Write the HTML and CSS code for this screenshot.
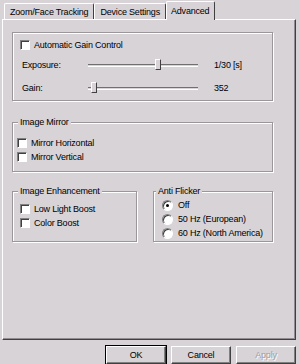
FILE: index.html
```html
<!DOCTYPE html>
<html lang="en">
<head>
  <meta charset="UTF-8">
  <title>Camera Properties</title>
  <link rel="stylesheet" href="styles.css">
</head>
<body>
  <div class="dialog">
    <div class="tabs">
      <div class="tab">Zoom/Face Tracking</div>
      <div class="tab">Device Settings</div>
      <div class="tab active">Advanced</div>
    </div>
    <div class="panel">
      <div class="group gain-group">
        <label class="check-row"><span class="checkbox"></span>Automatic Gain Control</label>
        <div class="slider-row">
          <span class="slider-label">Exposure:</span>
          <div class="slider"><div class="track"></div><div class="thumb" style="margin-left: 67px"></div></div>
          <span class="slider-value">1/30 [s]</span>
        </div>
        <div class="slider-row">
          <span class="slider-label">Gain:</span>
          <div class="slider"><div class="track"></div><div class="thumb" style="margin-left: 3px"></div></div>
          <span class="slider-value">352</span>
        </div>
      </div>

      <div class="group mirror-group">
        <div class="legend">Image Mirror</div>
        <label class="check-row"><span class="checkbox"></span>Mirror Horizontal</label>
        <label class="check-row"><span class="checkbox"></span>Mirror Vertical</label>
      </div>

      <div class="bottom-groups">
        <div class="group enhance-group">
          <div class="legend">Image Enhancement</div>
          <label class="check-row"><span class="checkbox"></span>Low Light Boost</label>
          <label class="check-row"><span class="checkbox"></span>Color Boost</label>
        </div>
        <div class="group flicker-group">
          <div class="legend">Anti Flicker</div>
          <label class="radio-row"><span class="radio checked"></span>Off</label>
          <label class="radio-row"><span class="radio"></span>50 Hz (European)</label>
          <label class="radio-row"><span class="radio"></span>60 Hz (North America)</label>
        </div>
      </div>
    </div>
    <div class="buttons">
      <button class="btn default">OK</button>
      <button class="btn">Cancel</button>
      <button class="btn" disabled>Apply</button>
    </div>
  </div>
</body>
</html>
```

FILE: styles.css
```css
html, body {
  margin: 0;
  padding: 0;
  background: #d7d3d7;
  font-family: "Liberation Sans", Arial, sans-serif;
  font-size: 9px;
  letter-spacing: -0.2px;
  color: black;
}
.dialog {
  width: 300px;
  height: 364px;
  display: flex;
  flex-direction: column;
}
.tabs {
  display: flex;
  align-items: flex-end;
  height: 20px;
  padding-left: 4px;
}
.tab {
  height: 13px;
  padding: 2px 5px 0;
  line-height: 13px;
  border-top: 1px solid #fff;
  border-left: 1px solid #fff;
  border-right: 1px solid #404040;
  border-radius: 2px 2px 0 0;
}
.tab.active {
  height: 16px;
  padding: 2px 5px 0 4px;
  line-height: 15px;
  position: relative;
  z-index: 1;
  margin-bottom: -1px;
  background: #d7d3d7;
}
.panel {
  height: 315px;
  margin: 0 4px 0 2px;
  border-top: 1px solid #fff;
  border-left: 1px solid #fff;
  border-right: 1px solid #404040;
  border-bottom: 1px solid #404040;
  box-shadow: inset -1px -1px 0 #908c90;
  padding: 12px 22px 0 9px;
}
.group {
  border: 1px solid #9a969a;
  box-shadow: inset 1px 1px 0 #fff, 1px 1px 0 #fff;
}
.legend {
  width: fit-content;
  margin: -6px 0 0 5px;
  padding: 0 2px;
  background: #d7d3d7;
  line-height: 11px;
}
.gain-group {
  height: 67px;
  padding: 0 0 0 7px;
}
.check-row, .radio-row {
  display: flex;
  align-items: center;
  gap: 4px;
  height: 14px;
}
.gain-group .check-row {
  margin-top: 5px;
}
.checkbox {
  width: 8px;
  height: 8px;
  background: #fff;
  border: 1px solid;
  border-color: #808080 #fff #fff #808080;
  box-shadow: inset 1px 1px 0 #404040;
}
.radio {
  width: 9px;
  height: 9px;
  border-radius: 50%;
  background: #fff;
  border: 1px solid;
  border-color: #808080 #fff #fff #808080;
  box-shadow: inset 1px 1px 0 #404040;
  display: flex;
  align-items: center;
  justify-content: center;
}
.radio.checked::after {
  content: "";
  width: 3px;
  height: 3px;
  border-radius: 50%;
  background: #000;
}
.slider-row {
  display: flex;
  align-items: center;
  height: 22px;
  padding-left: 2px;
}
.slider-row + .slider-row {
  margin-top: 1px;
}
.gain-group .check-row + .slider-row {
  margin-top: 2px;
}
.slider-label {
  width: 66px;
}
.slider {
  width: 110px;
  height: 12px;
  display: flex;
  align-items: center;
  position: relative;
}
.track {
  width: 100%;
  height: 1px;
  border-top: 1px solid #707070;
  border-bottom: 1px solid #fff;
}
.thumb {
  position: absolute;
  left: 0;
  top: 0;
  width: 4px;
  height: 9px;
  background: #d7d3d7;
  border: 1px solid;
  border-color: #fff #404040 #404040 #fff;
}
.slider-value {
  margin-left: 16px;
}
.mirror-group {
  margin-top: 21px;
  height: 48px;
}
.mirror-group .legend {
  margin-bottom: 8px;
}
.mirror-group .check-row {
  padding-left: 4px;
}
.bottom-groups {
  display: flex;
  gap: 16px;
  margin-top: 19px;
}
.enhance-group {
  width: 123px;
  height: 49px;
}
.enhance-group .legend {
  margin-bottom: 5px;
}
.enhance-group .check-row {
  padding-left: 7px;
}
.flicker-group {
  flex: 1;
  height: 49px;
}
.flicker-group .legend {
  margin: -6px 0 1px 2px;
}
.flicker-group .radio-row {
  gap: 5px;
  padding-left: 8px;
}
.buttons {
  display: flex;
  justify-content: flex-end;
  gap: 5px;
  padding: 6px 4px 0 0;
}
.btn {
  width: 60px;
  height: 18px;
  padding: 0;
  font-family: inherit;
  font-size: 9px;
  letter-spacing: -0.2px;
  color: #000;
  background: #d7d3d7;
  border: 1px solid;
  border-color: #fff #404040 #404040 #fff;
  box-shadow: inset -1px -1px 0 #808080;
  border-radius: 0;
}
.btn.default {
  outline: 1px solid #000;
  outline-offset: 0;
}
.btn:disabled {
  color: #a09ca0;
  text-shadow: 1px 1px 0 #fff;
}
```
